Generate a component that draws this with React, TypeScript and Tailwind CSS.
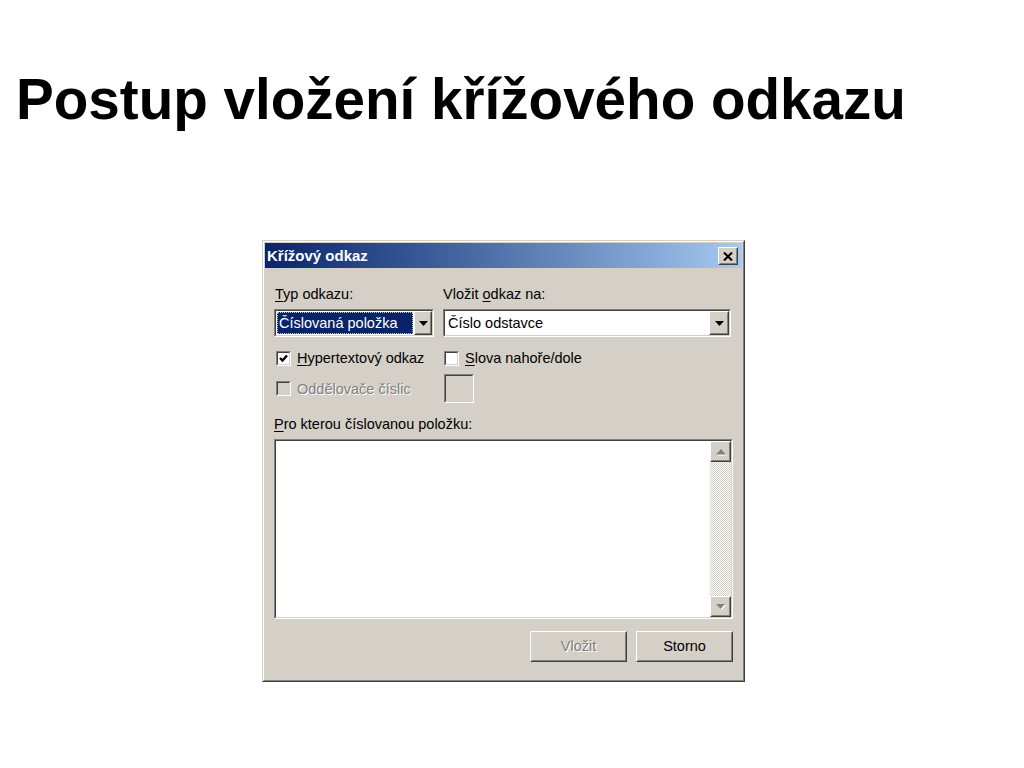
import React from "react";

const UI = "font-['Liberation_Sans',Arial,sans-serif]";

function Raised({ className = "", innerClassName = "", children }: { className?: string; innerClassName?: string; children?: React.ReactNode }) {
  return (
    <div className={`border border-t-white border-l-white border-r-[#404040] border-b-[#404040] ${className}`}>
      <div className={`h-full w-full border border-t-[#d4d0c8] border-l-[#d4d0c8] border-r-[#808080] border-b-[#808080] bg-[#d4d0c8] ${innerClassName}`}>
        {children}
      </div>
    </div>
  );
}

function Sunken({ className = "", innerClassName = "", children }: { className?: string; innerClassName?: string; children?: React.ReactNode }) {
  return (
    <div className={`border border-t-[#808080] border-l-[#808080] border-r-white border-b-white ${className}`}>
      <div className={`h-full w-full border border-t-[#404040] border-l-[#404040] border-r-[#d4d0c8] border-b-[#d4d0c8] ${innerClassName}`}>
        {children}
      </div>
    </div>
  );
}

function DownArrow({ disabled = false }: { disabled?: boolean }) {
  return (
    <svg width="11" height="7" viewBox="0 0 11 7" className="block">
      {disabled && <path d="M2 2h9l-4.5 5z" fill="#ffffff" />}
      <path d="M1 1h9l-4.5 5z" fill={disabled ? "#808080" : "#000000"} />
    </svg>
  );
}

function UpArrow({ disabled = false }: { disabled?: boolean }) {
  return (
    <svg width="12" height="8" viewBox="0 0 12 8" className="block">
      {disabled && <path d="M2 7.5h10l-5-5.5z" fill="#ffffff" />}
      <path d="M1 6.5h10l-5-5.5z" fill={disabled ? "#808080" : "#000000"} />
    </svg>
  );
}

function Checkbox({ checked = false, disabled = false }: { checked?: boolean; disabled?: boolean }) {
  return (
    <Sunken className="w-[15px] h-[15px] shrink-0" innerClassName={`${disabled ? "bg-[#d4d0c8]" : "bg-white"} flex items-center justify-center`}>
      {checked && (
        <svg width="9" height="9" viewBox="0 0 9 9" className="block">
          <path d="M1 4l2.5 2.5L8 1.5" stroke="#000" strokeWidth="2.4" fill="none" />
        </svg>
      )}
    </Sunken>
  );
}

export default function App() {
  return (
    <div className="w-[1024px] h-[768px] bg-white overflow-hidden">
      <h1 className="pt-[72px] pl-[16px] text-[56.6px] leading-[56px] font-bold text-black font-['Liberation_Sans',Arial,sans-serif] whitespace-nowrap">
        Postup vložení křížového odkazu
      </h1>

      <div className={`ml-[262px] mt-[112px] w-[483px] h-[442px] border border-t-[#d4d0c8] border-l-[#d4d0c8] border-r-[#404040] border-b-[#404040] ${UI} text-[14.5px] text-black`}>
        <div className="h-full border border-t-white border-l-white border-r-[#808080] border-b-[#808080] bg-[#d4d0c8] p-px flex flex-col">
          {/* Title bar */}
          <div className="h-[25px] shrink-0 bg-linear-to-r from-[#0a246a] to-[#a6caf0] flex items-center justify-between pl-[2px] pr-[4px]">
            <span className="text-white font-bold text-[15px] leading-none">Křížový odkaz</span>
            <Raised className="w-[20px] h-[18px] mt-px" innerClassName="flex items-center justify-center">
              <svg width="10" height="9" viewBox="0 0 10 9" className="block">
                <path d="M1 0.5l8 8M9 0.5l-8 8" stroke="#000" strokeWidth="2" />
              </svg>
            </Raised>
          </div>

          {/* Content */}
          <div className="flex-1 pl-[9px] pr-[9px] flex flex-col">
            <div className="mt-[18px] grid grid-cols-[169px_1fr] h-[16px] leading-[16px]">
              <span className="pl-[1px]"><span className="underline underline-offset-2">T</span>yp odkazu:</span>
              <span>Vložit <span className="underline underline-offset-2">o</span>dkaz na:</span>
            </div>

            <div className="mt-[7px] grid grid-cols-[169px_1fr] h-[28px]">
              <Sunken className="w-[160px] h-[28px]" innerClassName="bg-white flex">
                <div className="flex-1 m-px bg-[#0a246a] text-white leading-[22px] pl-[2px] outline-1 outline-dotted outline-[#c8c8a0] -outline-offset-1">
                  Číslovaná položka
                </div>
                <Raised className="w-[18px] h-full" innerClassName="flex items-center justify-center">
                  <DownArrow />
                </Raised>
              </Sunken>
              <Sunken className="w-[288px] h-[28px]" innerClassName="bg-white flex">
                <div className="flex-1 leading-[24px] pl-[3px]">Číslo odstavce</div>
                <Raised className="w-[20px] h-full" innerClassName="flex items-center justify-center">
                  <DownArrow />
                </Raised>
              </Sunken>
            </div>

            <div className="mt-[13px] grid grid-cols-[169px_1fr] h-[15px] items-center">
              <div className="flex items-center pl-[2px] gap-[6px]">
                <Checkbox checked />
                <span className="leading-[16px]"><span className="underline underline-offset-2">H</span>ypertextový odkaz</span>
              </div>
              <div className="flex items-center pl-[1px] gap-[6px]">
                <Checkbox />
                <span className="leading-[16px]"><span className="underline underline-offset-2">S</span>lova nahoře/dole</span>
              </div>
            </div>

            <div className="mt-[9px] grid grid-cols-[169px_1fr] h-[29px] items-center">
              <div className="flex items-center pl-[2px] gap-[6px]">
                <Checkbox disabled />
                <span className="leading-[16px] text-[#808080] [text-shadow:1px_1px_0_#ffffff]">Oddělovače číslic</span>
              </div>
              <div className="pl-[1px]">
                <Sunken className="w-[30px] h-[29px]" innerClassName="bg-[#d4d0c8]" />
              </div>
            </div>

            <div className="mt-[13px] h-[16px] leading-[16px]">
              <span className="underline underline-offset-2">P</span>ro kterou číslovanou položku:
            </div>

            <Sunken className="mt-[7px] w-[459px] h-[180px]" innerClassName="bg-white flex justify-end">
              <div className="w-[21px] h-full flex flex-col bg-[repeating-conic-gradient(#d4d0c8_0_25%,#ffffff_0_50%)] bg-size-[2px_2px]">
                <Raised className="w-[21px] h-[21px]" innerClassName="flex items-center justify-center">
                  <UpArrow disabled />
                </Raised>
                <div className="flex-1" />
                <Raised className="w-[21px] h-[21px]" innerClassName="flex items-center justify-center">
                  <DownArrow disabled />
                </Raised>
              </div>
            </Sunken>

            <div className="mt-[12px] flex justify-end gap-[9px]">
              <Raised className="w-[97px] h-[31px]" innerClassName="flex items-center justify-center">
                <span className="text-[#808080] [text-shadow:1px_1px_0_#ffffff]">Vložit</span>
              </Raised>
              <Raised className="w-[97px] h-[31px]" innerClassName="flex items-center justify-center">
                <span>Storno</span>
              </Raised>
            </div>
          </div>
        </div>
      </div>
    </div>
  );
}
